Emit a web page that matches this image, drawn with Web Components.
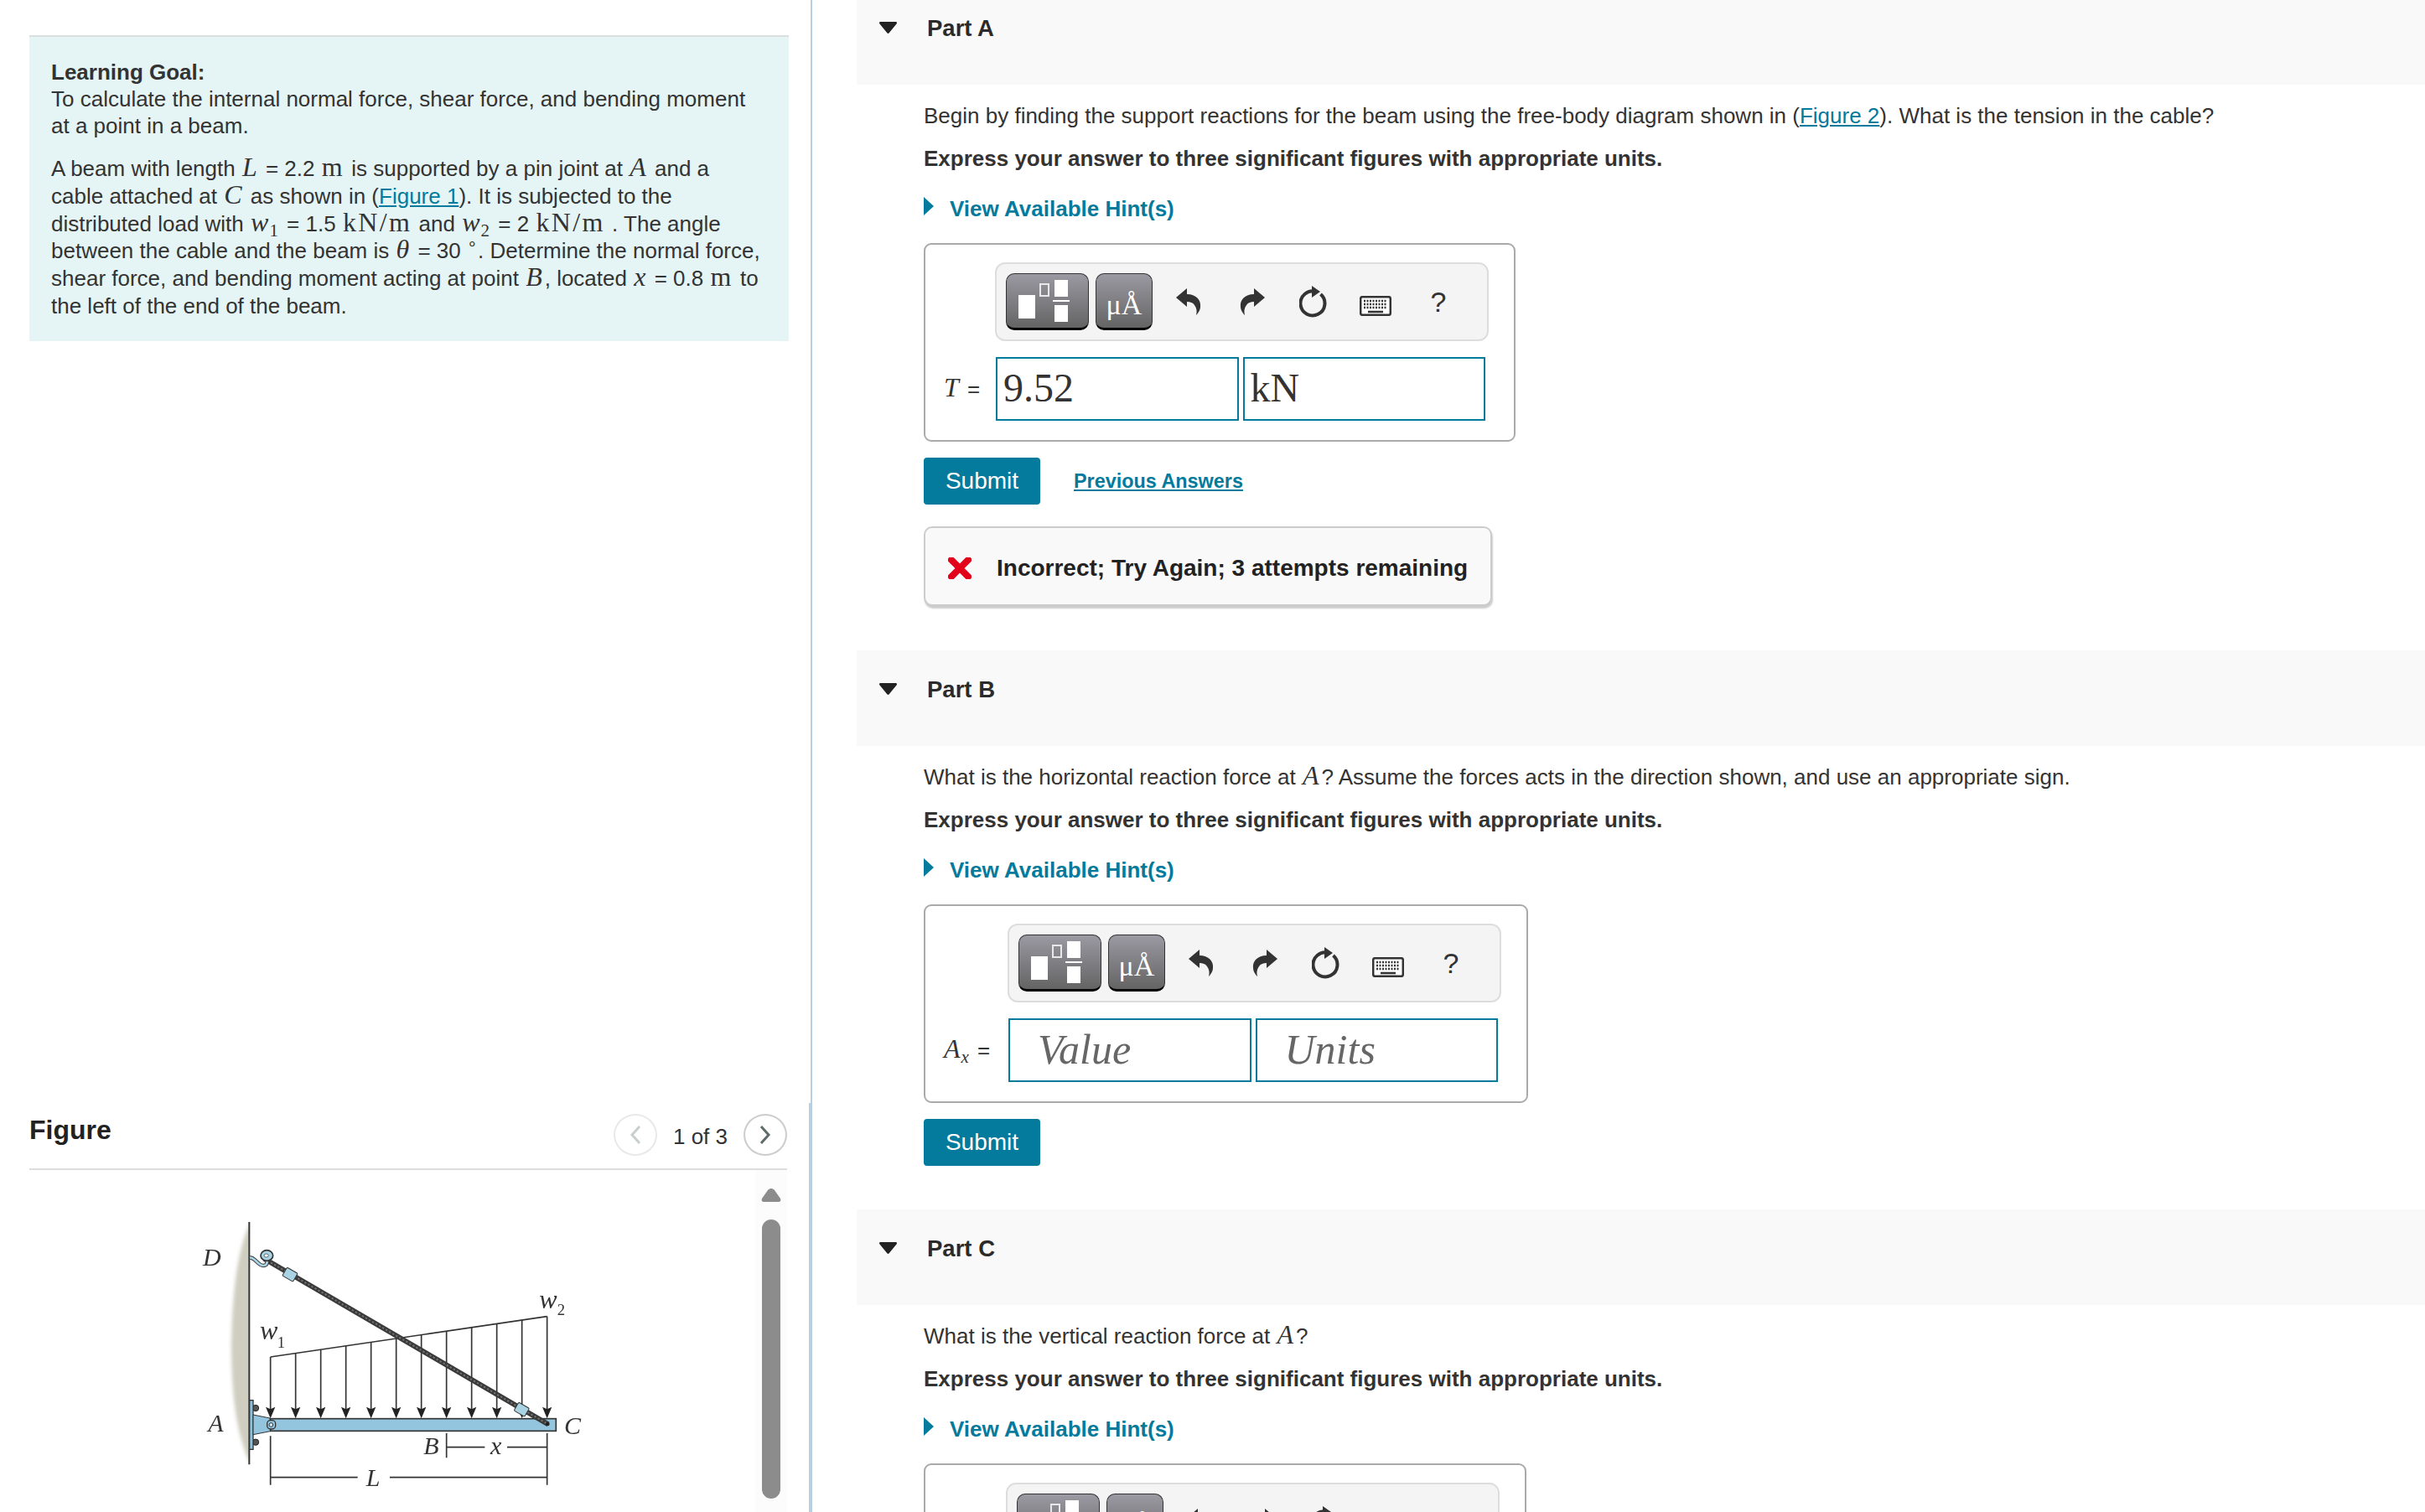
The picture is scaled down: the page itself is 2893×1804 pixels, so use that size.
<!DOCTYPE html>
<html>
<head>
<meta charset="utf-8">
<title>Beam problem</title>
<style>
    html, body { margin: 0; height: 1804px; overflow: hidden; background: #fff; }
    body { font: 26px/32px "Liberation Sans", Arial, sans-serif; color: #333; }
    mp-page { height: 1804px; }
    a { color: #047a9c; }
    sup.deg { font-size: 20px; line-height: 0; }
</style>
</head>
<body>
<mp-page>
    <mp-goal slot="left">
        <b>Learning Goal:</b><br>
        To calculate the internal normal force, shear force, and bending moment<br>at a point in a beam.
        <span slot="detail">A beam with length <mp-math>L</mp-math> = 2.2 <mp-math roman>m</mp-math> is supported by a pin joint at <mp-math>A</mp-math> and a<br>
        cable attached at <mp-math>C</mp-math> as shown in (<a href="#">Figure 1</a>). It is subjected to the<br>
        distributed load with <mp-math sub="1">w</mp-math> = 1.5 <mp-math roman>kN/m</mp-math> and <mp-math sub="2">w</mp-math> = 2 <mp-math roman>kN/m</mp-math> . The angle<br>
        between the cable and the beam is <mp-math>θ</mp-math> = 30 <sup class="deg">∘</sup>. Determine the normal force,<br>
        shear force, and bending moment acting at point <mp-math>B</mp-math>, located <mp-math>x</mp-math> = 0.8 <mp-math roman>m</mp-math> to<br>
        the left of the end of the beam.</span>
    </mp-goal>
    <mp-figure slot="left"></mp-figure>

    <mp-part slot="right" title="Part A" style="padding-bottom:53px">
        <span slot="question">Begin by finding the support reactions for the beam using the free-body diagram shown in (<a href="#">Figure 2</a>). What is the tension in the cable?</span>
        <mp-answer label-width="63" value="9.52" unit="kN"><mp-math>T</mp-math> =</mp-answer>
        <mp-submit prev></mp-submit>
        <mp-feedback>Incorrect; Try Again; 3 attempts remaining</mp-feedback>
    </mp-part>

    <mp-part slot="right" title="Part B" style="padding-bottom:52px">
        <span slot="question">What is the horizontal reaction force at <mp-math>A</mp-math>? Assume the forces acts in the direction shown, and use an appropriate sign.</span>
        <mp-answer label-width="78"><mp-math sub="x">A</mp-math> =</mp-answer>
        <mp-submit></mp-submit>
    </mp-part>

    <mp-part slot="right" title="Part C">
        <span slot="question">What is the vertical reaction force at <mp-math>A</mp-math>?</span>
        <mp-answer label-width="76"><mp-math sub="y">A</mp-math> =</mp-answer>
    </mp-part>
</mp-page>

<script>
const LINK = "#047a9c";

class MpPage extends HTMLElement {
    constructor() {
        super();
        this.attachShadow({ mode: "open" });
        this.shadowRoot.innerHTML = `
            <style>
                :host { display: flex; width: 100%; overflow: hidden; }
                .left { width: 969px; flex: none; display: flex; flex-direction: column; box-sizing: border-box; }
                .right { flex: 1; min-width: 0; padding-left: 53px; overflow: hidden; }
                .scroll { margin-top: -13px; }
            </style>
            <div class="left"><slot name="left"></slot></div>
            <div class="right"><div class="scroll"><slot name="right"></slot></div></div>
        `;
    }
}

class MpMath extends HTMLElement {
    constructor() {
        super();
        this.attachShadow({ mode: "open" });
        const sub = this.getAttribute("sub");
        const letter = sub && isNaN(sub);
        // no whitespace around the slot, it would show up as a space in the sentence
        this.shadowRoot.innerHTML = `<style>
                :host { display: inline; font-family: "Liberation Serif", "Times New Roman", serif; font-size: 32px; line-height: 0; font-style: italic; margin: 0 3px 0 1px; }
                :host([roman]) { font-style: normal; font-size: 32px; letter-spacing: 2.4px; margin-right: 1px; }
                sub { font-size: 21px; font-style: ${letter ? "italic" : "normal"}; line-height: 0; vertical-align: -6px; margin-left: 1px; }
            </style><slot></slot>${sub ? `<sub>${sub}</sub>` : ""}`;
    }
}

class MpGoal extends HTMLElement {
    constructor() {
        super();
        this.attachShadow({ mode: "open" });
        this.shadowRoot.innerHTML = `
            <style>
                :host { display: block; height: 1316px; box-sizing: border-box; padding: 42px 0 0 35px; border-right: 2px solid #b9cfe2; flex: none; }
                .box { width: 906px; box-sizing: border-box; background: #e5f5f6; border-top: 2px solid #dcdfe0; padding: 26px 26px 25px; white-space: nowrap; }
                .detail { margin-top: 19px; line-height: 32.8px; }
            </style>
            <div class="box">
                <div><slot></slot></div>
                <div class="detail"><slot name="detail"></slot></div>
            </div>
        `;
    }
}

class MpFigure extends HTMLElement {
    constructor() {
        super();
        this.attachShadow({ mode: "open" });
        const xs = [];
        for (let i = 0; i < 12; i++) xs.push(308 + i * 90);
        const arrows = xs.map((x) => {
            const top = 477 - (x - 308) * 145 / 990;
            return `<line x1="${x}" y1="${top}" x2="${x}" y2="680" stroke="#333" stroke-width="5"/>
                <path d="M${x - 17} 656 L${x} 664 L${x + 17} 656 L${x} 697 Z" fill="#222"/>`;
        }).join("");
        this.shadowRoot.innerHTML = `
            <style>
                :host { display: block; flex: 1; box-sizing: border-box; padding-left: 35px; border-right: 4px solid #b9cfe2; overflow: hidden; }
                .head { width: 904px; height: 80px; box-sizing: border-box; border-bottom: 2px solid #ddd; display: flex; align-items: flex-start; padding-top: 13px; }
                h2 { margin: 0; font-size: 32px; line-height: 38px; color: #222; font-weight: 700; flex: 1; }
                .pager { display: flex; align-items: center; height: 50px; font-size: 26px; color: #333; }
                .circle { width: 52px; height: 50px; box-sizing: border-box; border: 2px solid #ccc; border-radius: 50%; display: flex; align-items: center; justify-content: center; }
                .circle.off { border-color: #e8e8e8; }
                .count { width: 103px; text-align: center; padding-top: 4px; box-sizing: border-box; }
                .body { width: 904px; height: 408px; display: flex; }
                .art { width: 866px; overflow: hidden; }
                svg.fig { display: block; margin: 34px 0 0 185px; filter: blur(.55px); font-family: "Liberation Serif", serif; font-style: italic; }
                .bar { width: 38px; background: #fcfcfc; display: flex; flex-direction: column; align-items: center; padding-top: 21px; box-sizing: border-box; }
                .thumb { width: 22px; height: 333px; margin-top: 20px; border-radius: 11px; background: #8c8c8c; }
            </style>
            <div class="head">
                <h2>Figure</h2>
                <div class="pager">
                    <div class="circle off"><svg width="14" height="24" viewBox="0 0 14 24"><path d="M12 2 L3 12 L12 22" fill="none" stroke="#c9cfcf" stroke-width="3"/></svg></div>
                    <div class="count">1 of 3</div>
                    <div class="circle"><svg width="14" height="24" viewBox="0 0 14 24"><path d="M2 2 L11 12 L2 22" fill="none" stroke="#5f6b6b" stroke-width="3"/></svg></div>
                </div>
            </div>
            <div class="body">
                <div class="art">
                    <svg class="fig" width="500" height="374" viewBox="0 -90 1500 1122">
                        <defs>
                            <filter id="soft" x="-40%" y="-5%" width="180%" height="110%"><feGaussianBlur stdDeviation="7"/></filter>
                        </defs>
                        <path d="M240 -10 C195 70 172 220 168 430 C168 600 184 760 240 868 Z" fill="#cfcdbf" filter="url(#soft)"/>
                        <rect x="232" y="-40" width="40" height="950" fill="#fff"/>
                        <line x1="232" y1="-6" x2="232" y2="862" stroke="#333" stroke-width="6"/>
                        <circle cx="255" cy="660" r="11" fill="#555" stroke="#222" stroke-width="3"/>
                        <circle cx="255" cy="782" r="11" fill="#555" stroke="#222" stroke-width="3"/>
                        <rect x="233" y="632" width="13" height="176" fill="#8fc1da" stroke="#333" stroke-width="4"/>
                        <path d="M246 684 L306 696 L312 742 L246 755 Z" fill="#93c6de" stroke="#333" stroke-width="3"/>
                        <rect x="308" y="698" width="1022" height="44" fill="#93c6de" stroke="#333" stroke-width="5"/>
                        <rect x="296" y="704" width="30" height="31" rx="12" fill="#93c6de" stroke="#333" stroke-width="4"/>
                        <circle cx="310" cy="720" r="7" fill="#dceaf0" stroke="#333" stroke-width="3"/>
                        <line x1="308" y1="477" x2="1298" y2="332" stroke="#333" stroke-width="5"/>
                        ${arrows}
                        <line x1="285" y1="125" x2="1302" y2="718" stroke="#3a3a3a" stroke-width="18"/>
                        <line x1="285" y1="125" x2="1302" y2="718" stroke="#707070" stroke-width="6" stroke-dasharray="7 7"/>
                        <g fill="#a9d3e3" stroke="#333" stroke-width="3">
                            <rect x="-22" y="-17" width="44" height="34" rx="4" transform="translate(378 182) rotate(30)"/>
                            <rect x="-22" y="-17" width="44" height="34" rx="4" transform="translate(1207 665) rotate(30)"/>
                        </g>
                        <path d="M234 122 C252 118 262 150 282 150 C295 150 300 138 292 128" fill="none" stroke="#333" stroke-width="14"/>
                        <path d="M234 122 C252 118 262 150 282 150 C295 150 300 138 292 128" fill="none" stroke="#a9d3e3" stroke-width="8"/>
                        <ellipse cx="295" cy="114" rx="22" ry="19" fill="#a9d3e3" stroke="#333" stroke-width="5"/>
                        <ellipse cx="293" cy="114" rx="8" ry="6" fill="#fff" stroke="#333" stroke-width="2"/>
                        <circle cx="1300" cy="717" r="7" fill="#222"/>
                        <g stroke="#333" stroke-width="5" fill="none">
                            <path d="M938 750 V838 M1298 750 V935 M308 760 V935"/>
                            <path d="M938 800 H1075 M1155 800 H1298 M308 908 H620 M735 908 H1298"/>
                        </g>
                        <g fill="#333" font-size="90">
                            <text x="66" y="150">D</text>
                            <text x="85" y="745">A</text>
                            <text x="1359" y="752">C</text>
                            <text x="856" y="826">B</text>
                            <text x="1095" y="826">x</text>
                            <text x="650" y="940">L</text>
                            <text x="270" y="415" font-size="96">w</text>
                            <text x="1270" y="302" font-size="96">w</text>
                            <text x="332" y="443" font-size="56" font-style="normal">1</text>
                            <text x="1334" y="328" font-size="56" font-style="normal">2</text>
                        </g>
                    </svg>
                </div>
                <div class="bar">
                    <svg width="24" height="18" viewBox="0 0 24 18"><path d="M12 1 C10 1 9 2 8 3 L1 13 C0 15 1 17 3 17 H21 C23 17 24 15 23 13 L16 3 C15 2 14 1 12 1 Z" fill="#8c8c8c"/></svg>
                    <div class="thumb"></div>
                </div>
            </div>
        `;
    }
}

class MpPart extends HTMLElement {
    constructor() {
        super();
        this.attachShadow({ mode: "open" });
        this.shadowRoot.innerHTML = `
            <style>
                :host { display: block; padding-bottom: 52px; }
                .head { height: 114px; box-sizing: border-box; background: #f9f9f9; display: flex; align-items: flex-start; padding: 30px 0 0 27px; }
                .tri { width: 21px; height: 14px; margin-top: 9px; flex: none; }
                .title { margin: 1px 0 0 36px; font-size: 27.5px; line-height: 32px; font-weight: 700; color: #2b2b2b; }
                .body { padding: 21px 0 0 80px; }
                .q { height: 32px; white-space: nowrap; }
                .exp { margin-top: 19px; font-weight: 700; white-space: nowrap; }
                .hint { margin-top: 28px; display: flex; align-items: center; color: ${LINK}; font-weight: 700; font-size: 26px; }
                .hint svg { margin: -6px 19px 0 0; }
                .work { margin-top: 25px; display: flex; flex-direction: column; align-items: flex-start; }
            </style>
            <div class="head">
                <svg class="tri" viewBox="0 0 21 14"><path d="M1.5 0 H19.5 C21 0 21.5 1.5 20.5 2.5 L11.5 13.5 C11 14 10 14 9.5 13.5 L.5 2.5 C-.5 1.5 0 0 1.5 0 Z" fill="#222"/></svg>
                <div class="title">${this.getAttribute("title")}</div>
            </div>
            <div class="body">
                <div class="q"><slot name="question"></slot></div>
                <div class="exp">Express your answer to three significant figures with appropriate units.</div>
                <div class="hint">
                    <svg width="12" height="22" viewBox="0 0 12 22"><path d="M0 0 L12 11 L0 22 Z" fill="${LINK}"/></svg>
                    <span>View Available Hint(s)</span>
                </div>
                <div class="work"><slot></slot></div>
            </div>
        `;
    }
}

class MpToolbar extends HTMLElement {
    constructor() {
        super();
        this.attachShadow({ mode: "open" });
        this.shadowRoot.innerHTML = `
            <style>
                :host { display: flex; align-items: flex-start; width: 589px; height: 94px; box-sizing: border-box; background: #f4f4f4; border: 2px solid #ddd; border-radius: 12px; padding: 11px 0 0 11px; }
                .btn { height: 68px; box-sizing: border-box; border: 1px solid #333; border-bottom: 3px solid #000; border-radius: 10px; background: linear-gradient(#9b99a2, #646464); display: flex; align-items: center; justify-content: center; }
                .templates { width: 99px; margin-right: 8px; }
                .units { width: 68px; color: #fff; font: 34px/1 "Liberation Serif", serif; padding-top: 10px; }
                .tool { height: 68px; display: flex; align-items: center; justify-content: center; }
                .q { font: 34px/1 "Liberation Sans", sans-serif; color: #333; padding-bottom: 6px; }
                .kbd { margin-top: 10px; }
            </style>
            <div class="btn templates">
                <svg width="97" height="64" viewBox="1 1 97 64">
                    <rect x="15" y="26" width="20" height="28" fill="#fff"/>
                    <rect x="41" y="13" width="10" height="14" fill="none" stroke="#e8e8e8" stroke-width="2"/>
                    <rect x="58" y="8" width="16" height="20" fill="#fff"/>
                    <rect x="56" y="32" width="20" height="2" fill="#fff"/>
                    <rect x="58" y="38" width="16" height="20" fill="#fff"/>
                </svg>
            </div>
            <div class="btn units">μÅ</div>
            <div class="tool" style="width:74px;margin-left:6px">
                <svg width="30" height="32" viewBox="0 0 30 32"><path d="M0 11 L13 0 V7 C24 7 30 14 29 22 C29 26 26 30 24 32 C25 28 25 24 22 20 C20 17 17 16 13 16 V22 Z" fill="#333"/></svg>
            </div>
            <div class="tool" style="width:78px">
                <svg width="30" height="32" viewBox="0 0 30 32"><path d="M30 11 L17 0 V7 C6 7 0 14 1 22 C1 26 4 30 6 32 C5 28 5 24 8 20 C10 17 13 16 17 16 V22 Z" fill="#333"/></svg>
            </div>
            <div class="tool" style="width:68px">
                <svg width="34" height="38" viewBox="0 0 34 38"><path d="M20 7 A14.5 14.5 0 1 0 25.5 10" fill="none" stroke="#333" stroke-width="4"/><path d="M15 0 L25 7 L15 14 Z" fill="#333"/></svg>
            </div>
            <div class="tool" style="width:80px">
                <svg class="kbd" width="38" height="24" viewBox="0 0 38 24">
                    <rect x="1.2" y="1.2" width="35.6" height="21.6" rx="2" fill="#fff" stroke="#333" stroke-width="2.5"/>
                    <path d="M5 6 H33 M5 10 H33 M5 14 H33" stroke="#333" stroke-width="2.5" stroke-dasharray="2 1.5"/>
                    <path d="M10 19 H28" stroke="#333" stroke-width="2.5"/>
                </svg>
            </div>
            <div class="tool q" style="width:70px">?</div>
        `;
    }
}

class MpAnswer extends HTMLElement {
    constructor() {
        super();
        this.attachShadow({ mode: "open" });
        const value = this.getAttribute("value");
        const unit = this.getAttribute("unit");
        const labelWidth = this.getAttribute("label-width");
        this.shadowRoot.innerHTML = `
            <style>
                :host { display: grid; grid-template-columns: ${labelWidth}px 584px; row-gap: 19px; box-sizing: border-box; border: 2px solid #aaa; border-radius: 9px; padding: 21px 34px 23px 21px; background: #fff; }
                mp-toolbar { grid-column: 2; margin-left: -1px; }
                .label { align-self: center; font-size: 26px; white-space: nowrap; }
                .inputs { display: flex; gap: 5px; }
                .input { width: 290px; height: 76px; box-sizing: border-box; border: 2px solid ${LINK}; padding-left: 7px; font: 48px/70px "Liberation Serif", serif; color: #333; }
                .ph { padding-left: 33px; font-style: italic; color: #666; font-size: 50px; }
            </style>
            <mp-toolbar></mp-toolbar>
            <div class="label"><slot></slot></div>
            <div class="inputs">
                <div class="input ${value ? "" : "ph"}">${value || "Value"}</div>
                <div class="input ${unit ? "" : "ph"}">${unit || "Units"}</div>
            </div>
        `;
    }
}

class MpSubmit extends HTMLElement {
    constructor() {
        super();
        this.attachShadow({ mode: "open" });
        this.shadowRoot.innerHTML = `
            <style>
                :host { display: flex; align-items: center; margin-top: 19px; }
                .btn { width: 139px; height: 56px; border-radius: 4px; background: ${LINK}; color: #fff; font-size: 28px; line-height: 56px; text-align: center; }
                a { margin-left: 40px; color: ${LINK}; font-size: 23.4px; font-weight: 700; }
            </style>
            <div class="btn">Submit</div>
            ${this.hasAttribute("prev") ? `<a href="#">Previous Answers</a>` : ""}
        `;
    }
}

class MpFeedback extends HTMLElement {
    constructor() {
        super();
        this.attachShadow({ mode: "open" });
        this.shadowRoot.innerHTML = `
            <style>
                :host { display: flex; align-items: center; width: 678px; height: 95px; box-sizing: border-box; margin-top: 26px; padding: 4px 0 0 27px; background: #f9f9f9; border: 2px solid #ccc; border-radius: 10px; box-shadow: 1px 3px 2px #ccc; color: #222; font-weight: 700; font-size: 28px; }
                svg { margin-right: 30px; flex: none; }
            </style>
            <svg width="28" height="26" viewBox="0 0 28 26"><path d="M4 3 L24 23 M24 3 L4 23" stroke="#e2001a" stroke-width="8" stroke-linecap="round"/></svg>
            <span><slot></slot></span>
        `;
    }
}

customElements.define("mp-math", MpMath);
customElements.define("mp-toolbar", MpToolbar);
customElements.define("mp-page", MpPage);
customElements.define("mp-goal", MpGoal);
customElements.define("mp-figure", MpFigure);
customElements.define("mp-part", MpPart);
customElements.define("mp-answer", MpAnswer);
customElements.define("mp-submit", MpSubmit);
customElements.define("mp-feedback", MpFeedback);
</script>
</body>
</html>
